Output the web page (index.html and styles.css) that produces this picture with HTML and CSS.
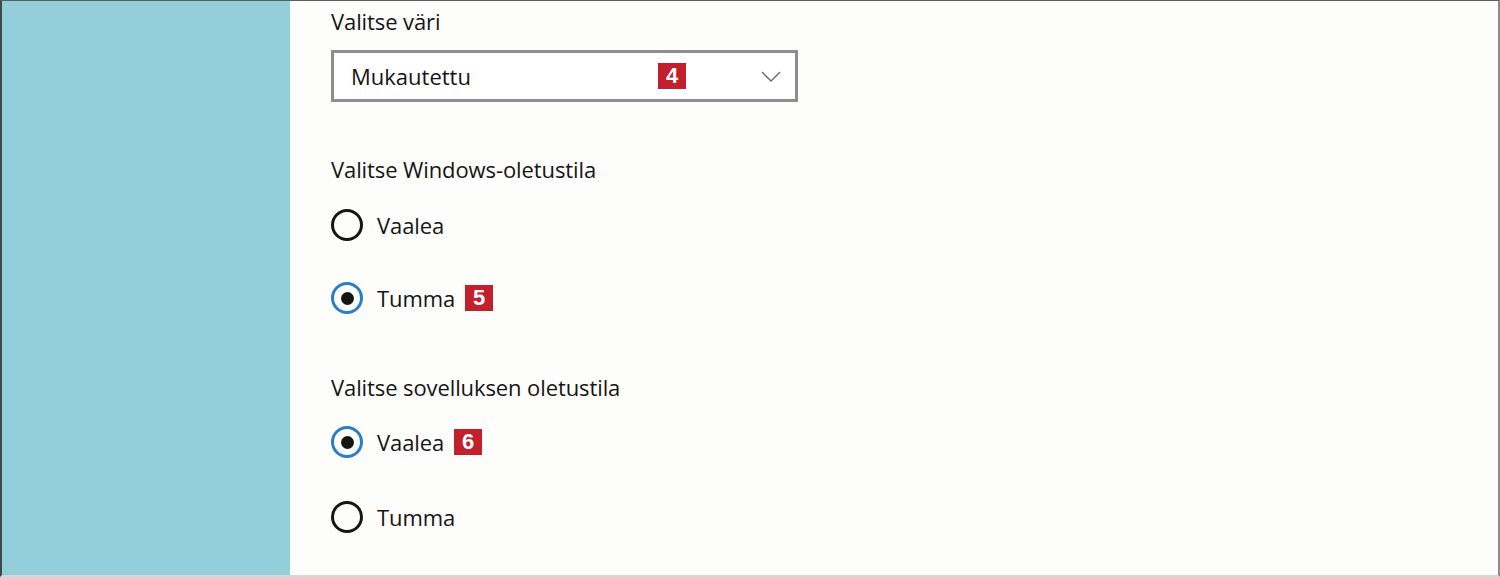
FILE: index.html
```html
<!DOCTYPE html>
<html lang="fi">
<head>
    <meta charset="UTF-8">
    <title>Värit</title>
    <link rel="stylesheet" href="styles.css">
</head>
<body>
    <div class="window">
        <div class="sidebar"></div>
        <div class="content">
            <div class="label first">Valitse väri</div>
            <div class="select">
                <span class="select-text">Mukautettu</span>
                <span class="badge badge-4">4</span>
                <svg class="chevron" width="20" height="11" viewBox="0 0 20 11">
                    <polyline points="1,1 10,10 19,1" fill="none" stroke="#666" stroke-width="1.3"/>
                </svg>
            </div>

            <div class="label mode">Valitse Windows-oletustila</div>
            <div class="radio-row r1"><span class="radio"></span>Vaalea</div>
            <div class="radio-row r2"><span class="radio checked"></span>Tumma <span class="badge">5</span></div>

            <div class="label app">Valitse sovelluksen oletustila</div>
            <div class="radio-row r3"><span class="radio checked"></span>Vaalea <span class="badge">6</span></div>
            <div class="radio-row r4"><span class="radio"></span>Tumma</div>
        </div>
    </div>
</body>
</html>
```

FILE: styles.css
```css
body {
    margin: 0;
    font-family: 'Open Sans', 'Noto Sans', sans-serif;
    color: #151515;
}
.window {
    display: flex;
    height: 577px;
    box-sizing: border-box;
    border-top: 1px solid #5a5f60;
    border-left: 2px solid #3d4a4c;
    border-right: 2px solid #8c8c8c;
    border-bottom: 2px solid #d8d8d8;
    background-color: #fdfdfb;
}
.sidebar {
    width: 288px;
    background-color: #92cfdb;
}
.content {
    flex: 1;
    padding-left: 41px;
    display: flex;
    flex-direction: column;
    align-items: flex-start;
}
.label {
    font-size: 22px;
    line-height: 30px;
    height: 30px;
    letter-spacing: -0.1px;
}
.first {
    margin-top: 5px;
}
.select {
    margin-top: 14px;
    width: 467px;
    height: 52px;
    box-sizing: border-box;
    border: 3px solid #8d8d8d;
    background-color: #fff;
    display: flex;
    align-items: center;
    padding-left: 17px;
    padding-right: 14px;
    font-size: 22px;
}
.select-text {
    flex: 1;
}
.badge-4 {
    margin-right: 75px;
}
.chevron {
    display: block;
}
.badge {
    display: inline-flex;
    align-items: center;
    justify-content: center;
    width: 28px;
    height: 26px;
    background-color: #c1202c;
    color: #fff;
    font-family: 'Liberation Sans', Arial, sans-serif;
    font-weight: bold;
    font-size: 22px;
    margin-left: 10px;
}
.mode {
    margin-top: 52px;
}
.app {
    margin-top: 54px;
}
.radio-row {
    display: flex;
    align-items: center;
    height: 40px;
    font-size: 22px;
    letter-spacing: -0.1px;
}
.r1 { margin-top: 21px; }
.r2 { margin-top: 33px; }
.r3 { margin-top: 20px; }
.r4 { margin-top: 35px; }
.radio {
    width: 32px;
    height: 32px;
    box-sizing: border-box;
    border: 3px solid #151515;
    border-radius: 50%;
    margin-right: 14px;
    display: flex;
    align-items: center;
    justify-content: center;
}
.radio.checked {
    border-color: #2a7fc4;
}
.radio.checked::after {
    content: "";
    width: 13px;
    height: 13px;
    border-radius: 50%;
    background-color: #151515;
}
```
